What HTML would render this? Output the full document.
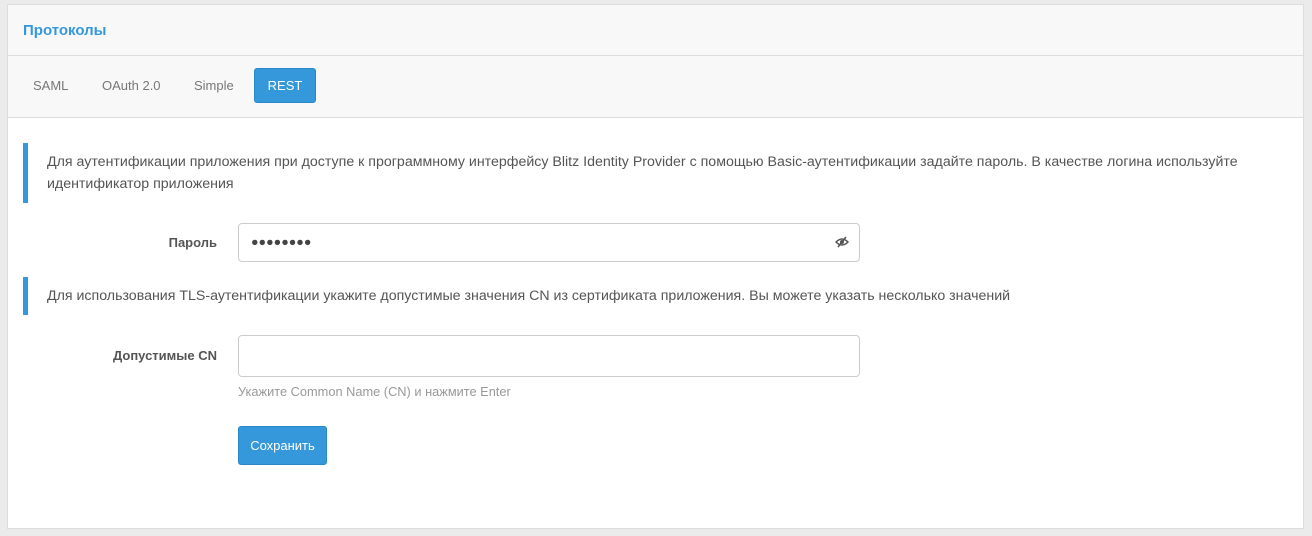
<!DOCTYPE html>
<html><head><meta charset="utf-8"><style>
body{margin:0;background:#ebebeb;font-family:"Liberation Sans",sans-serif;font-size:13px;color:#555;width:1312px;height:536px;overflow:hidden;position:relative}
.panel{position:absolute;left:7px;top:4px;width:1297px;height:525px;background:#fff;border:1px solid #ddd;box-sizing:border-box}
.hdr{height:51px;background:#f8f8f8;border-bottom:1px solid #ddd;box-sizing:border-box}
.hdr span{position:absolute;left:15px;top:17px;font-weight:bold;font-size:15px;color:#3498db}
.tabs{position:absolute;left:0;top:51px;width:100%;height:62px;background:#f8f8f8;border-bottom:1px solid #ddd;box-sizing:border-box}
.tab{position:absolute;top:22px;color:#777}
.rest{position:absolute;left:246px;top:12px;width:62px;height:35px;background:#3498db;border:1px solid #2a88c8;border-radius:3px;box-sizing:border-box;color:#fff;text-align:center;line-height:33px}
.note{position:absolute;left:15px;border-left:5px solid #3498db;padding-left:19px;line-height:22px;width:1240px;font-size:14.2px}
.lbl{position:absolute;font-weight:bold;text-align:right;width:200px;left:9px}
.inp{position:absolute;left:230px;width:622px;border:1px solid #ccc;border-radius:4px;box-sizing:border-box;background:#fff}
.btn{position:absolute;left:230px;top:421px;width:89px;height:39px;background:#3498db;border:1px solid #2a88c8;border-radius:3px;box-sizing:border-box;color:#fff;text-align:center;line-height:37px}
</style></head><body>
<div class="panel">
<div class="hdr"><span>Протоколы</span></div>
<div class="tabs">
<span class="tab" style="left:25px">SAML</span>
<span class="tab" style="left:94px">OAuth 2.0</span>
<span class="tab" style="left:186px">Simple</span>
<div class="rest">REST</div>
</div>
<div class="note" style="top:138px;height:60px;padding-top:8px;box-sizing:border-box">Для аутентификации приложения при доступе к программному интерфейсу Blitz Identity Provider с помощью Basic-аутентификации задайте пароль. В качестве логина используйте идентификатор приложения</div>
<div class="lbl" style="top:230px">Пароль</div>
<div class="inp" style="top:218px;height:39px"><span style="position:absolute;left:12px;top:11px;font-size:12.5px;color:#444">●●●●●●●●</span>
<svg style="position:absolute;right:10px;top:12px" width="14" height="12" viewBox="0 0 14 12"><path d="M1 6Q7 0 13 6Q7 12 1 6Z" fill="none" stroke="#555" stroke-width="1.5"/><circle cx="7" cy="6" r="2" fill="#555"/><path d="M3 11L11 1" stroke="#555" stroke-width="1.5"/></svg></div>
<div class="note" style="top:272px;height:38px;line-height:38px">Для использования TLS-аутентификации укажите допустимые значения CN из сертификата приложения. Вы можете указать несколько значений</div>
<div class="lbl" style="top:343px">Допустимые CN</div>
<div class="inp" style="top:330px;height:42px"></div>
<div style="position:absolute;left:230px;top:379px;font-size:12.8px;color:#999">Укажите Common Name (CN) и нажмите Enter</div>
<div class="btn">Сохранить</div>
</div>
</body></html>
